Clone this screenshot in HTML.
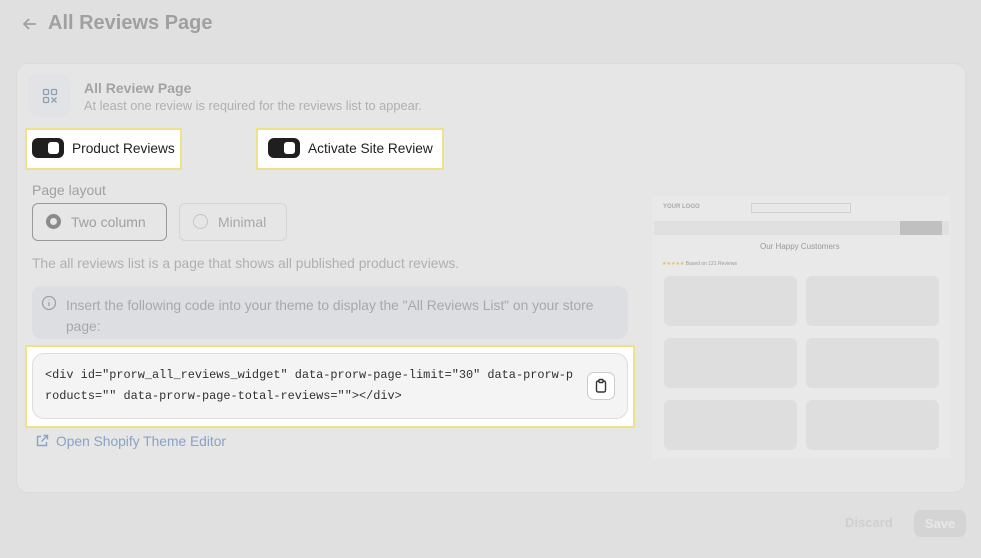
<!DOCTYPE html>
<html><head><meta charset="utf-8"><style>
*{box-sizing:border-box;margin:0;padding:0}
body{width:981px;height:558px;background:#e0e0e0;font-family:"Liberation Sans",sans-serif;position:relative;overflow:hidden}
.a{position:absolute}
.card{left:16px;top:63px;width:950px;height:430px;background:#e6e6e6;border:1px solid #dcdcdc;border-radius:12px}
.hl{background:#fff;border:2px solid #efe08a}
.tog{width:32px;height:20px;background:#1f1f1f;border-radius:6px}
.tog:after{content:"";position:absolute;right:5px;top:4px;width:11px;height:12px;background:#fff;border-radius:3px}
.t15{font-size:13.7px;color:#1f1f1f}
.mono{font-family:"Liberation Mono",monospace;font-size:11.9px;color:#303030;line-height:21px}
.p{background:#dedede;border-radius:6px}
</style></head><body>
<svg class="a" style="left:22px;top:16px" width="16" height="16" viewBox="0 0 16 16" fill="none" stroke="#a0a0a0" stroke-width="1.8"><path d="M14 8H2M7 3L2 8l5 5"/></svg>
<div class="a" style="left:48px;top:12px;font-size:20px;font-weight:bold;color:#a0a0a0">All Reviews Page</div>
<div class="a card"></div>
<div class="a" style="left:28px;top:74px;width:43px;height:43px;background:#e1e3e6;border-radius:10px"></div>
<svg class="a" style="left:42px;top:88px" width="16" height="16" viewBox="0 0 16 16" fill="none" stroke="#8fa0b0" stroke-width="1.3"><rect x="1.5" y="1.5" width="5" height="5" rx="1"/><rect x="9.5" y="1.5" width="5" height="5" rx="1"/><rect x="1.5" y="9.5" width="5" height="5" rx="1"/><path d="M9.5 9.5l5 5M14.5 9.5l-5 5"/></svg>
<div class="a" style="left:84px;top:80px;font-size:14px;font-weight:bold;color:#a3a3a3">All Review Page</div>
<div class="a" style="left:84px;top:98px;font-size:12.8px;color:#b0b0b0">At least one review is required for the reviews list to appear.</div>
<div class="a hl" style="left:25px;top:128px;width:157px;height:42px"></div>
<div class="a tog" style="left:32px;top:138px"></div>
<div class="a t15" style="left:72px;top:141px">Product Reviews</div>
<div class="a hl" style="left:256px;top:128px;width:188px;height:42px"></div>
<div class="a tog" style="left:268px;top:138px"></div>
<div class="a t15" style="left:308px;top:141px">Activate Site Review</div>
<div class="a" style="left:32px;top:182px;font-size:14px;color:#a0a0a0">Page layout</div>
<div class="a" style="left:32px;top:203px;width:135px;height:38px;border:1px solid #999;border-radius:6px"></div>
<div class="a" style="left:46px;top:214px;width:15px;height:15px;border:4px solid #8a8a8a;border-radius:50%"></div>
<div class="a" style="left:71px;top:214px;font-size:14px;color:#a0a0a0">Two column</div>
<div class="a" style="left:179px;top:203px;width:108px;height:38px;border:1px solid #d4d4d4;border-radius:6px"></div>
<div class="a" style="left:193px;top:214px;width:15px;height:15px;border:1px solid #c4c4c4;border-radius:50%"></div>
<div class="a" style="left:218px;top:214px;font-size:14px;color:#a8a8a8">Minimal</div>
<div class="a" style="left:32px;top:256px;font-size:13.8px;color:#b0b0b0">The all reviews list is a page that shows all published product reviews.</div>
<div class="a" style="left:32px;top:286px;width:596px;height:53px;background:#dcdee2;border-radius:10px"></div>
<svg class="a" style="left:41px;top:295px" width="16" height="16" viewBox="0 0 16 16" fill="none" stroke="#a0a0a0" stroke-width="1.3"><circle cx="8" cy="8" r="6.5"/><path d="M8 7v4M8 4.6v.8"/></svg>
<div class="a" style="left:66px;top:295px;width:550px;font-size:13.8px;line-height:21px;color:#a8a8a8">Insert the following code into your theme to display the "All Reviews List" on your store page:</div>
<div class="a hl" style="left:25px;top:345px;width:610px;height:83px"></div>
<div class="a" style="left:32px;top:353px;width:596px;height:66px;background:#f4f4f4;border:1px solid #ddd;border-radius:12px"></div>
<div class="a mono" style="left:45px;top:365px;white-space:pre">&lt;div id="prorw_all_reviews_widget" data-prorw-page-limit="30" data-prorw-p
roducts="" data-prorw-page-total-reviews=""&gt;&lt;/div&gt;</div>
<div class="a" style="left:587px;top:372px;width:28px;height:28px;background:#fff;border:1px solid #ccc;border-radius:7px"></div>
<svg class="a" style="left:593px;top:378px" width="16" height="16" viewBox="0 0 16 16" fill="none" stroke="#333" stroke-width="1.4"><rect x="3.5" y="3" width="9" height="11" rx="1.5"/><rect x="6" y="1.5" width="4" height="3" rx=".8" fill="#fff"/></svg>
<svg class="a" style="left:35px;top:434px" width="14" height="14" viewBox="0 0 14 14" fill="none" stroke="#8aa2c4" stroke-width="1.4"><path d="M6 2.5H2.5v9h9V8M8.5 1.5h4v4M12.5 1.5L6.5 7.5"/></svg>
<div class="a" style="left:56px;top:434px;font-size:13.8px;color:#8aa2c4">Open Shopify Theme Editor</div>
<div class="a" style="left:652px;top:196px;width:298px;height:262px;background:#e9e9e9;border-radius:2px"></div>
<div class="a" style="left:663px;top:204px;font-size:6px;color:#aaa;font-weight:bold">YOUR LOGO</div>
<div class="a" style="left:751px;top:203px;width:100px;height:10px;border:1px solid #d0d0d0"></div>
<div class="a" style="left:654px;top:221px;width:295px;height:14px;background:#e0e0e0"></div>
<div class="a" style="left:900px;top:221px;width:42px;height:14px;background:#c0c0c0"></div>
<div class="a" style="left:760px;top:242px;font-size:8px;color:#999">Our Happy Customers</div>
<div class="a" style="left:662px;top:261px;font-size:5px;color:#999"><span style="color:#e0c060">★★★★★</span> Based on 121 Reviews</div>
<div class="a p" style="left:664px;top:276px;width:133px;height:50px"></div>
<div class="a p" style="left:806px;top:276px;width:133px;height:50px"></div>
<div class="a p" style="left:664px;top:338px;width:133px;height:50px"></div>
<div class="a p" style="left:806px;top:338px;width:133px;height:50px"></div>
<div class="a p" style="left:664px;top:400px;width:133px;height:50px"></div>
<div class="a p" style="left:806px;top:400px;width:133px;height:50px"></div>
<div class="a" style="left:845px;top:515px;font-size:13px;font-weight:bold;color:#cfcfcf">Discard</div>
<div class="a" style="left:914px;top:510px;width:52px;height:27px;background:#d4d4d4;border-radius:7px;font-size:13px;font-weight:bold;color:#e8e8e8;text-align:center;line-height:27px">Save</div>
</body></html>
